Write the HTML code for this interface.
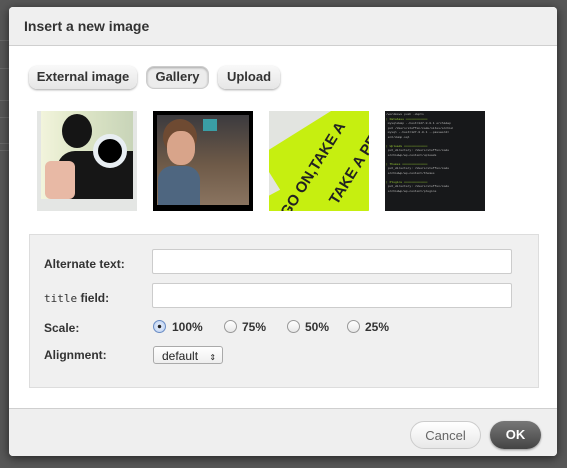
<!DOCTYPE html>
<html><head><style>
*{box-sizing:border-box;margin:0;padding:0}
body{width:567px;height:468px;background:#575757;font-family:"Liberation Sans",sans-serif;position:relative;overflow:hidden}
.bgl{position:absolute;left:0;width:9px;height:1px;background:#6a6a6a}
.dlg{position:absolute;left:9px;top:7px;width:548px;height:449px;background:#fff;border-radius:4px;overflow:hidden;box-shadow:0 2px 10px rgba(0,0,0,.6)}
.hd{height:39px;background:#efefef;border-bottom:1px solid #cfcfcf;font-weight:bold;font-size:14px;color:#333;padding:11px 0 0 15px}
.tab{position:absolute;top:59px;height:23px;border-radius:8px;background:linear-gradient(#f8f8f8,#e6e6e6);box-shadow:0 1px 2px rgba(0,0,0,.35);font-weight:bold;font-size:13px;color:#333;text-align:center;line-height:22px}
.tab.on{background:#ececec;box-shadow:inset 0 1px 2px rgba(0,0,0,.3);border:1px solid #ccc;line-height:20px}
.im{position:absolute;top:104px;width:100px;height:100px;overflow:hidden}
.panel{position:absolute;left:20px;top:227px;width:510px;height:154px;background:#f0f0f0;border:1px solid #ddd}
.lb{position:absolute;left:35px;font-weight:bold;font-size:12px;color:#333}
.inp{position:absolute;left:143px;width:360px;height:25px;background:#fff;border:1px solid #ccc;border-radius:2px}
.rad{position:absolute;top:313px;width:13px;height:13px;border-radius:50%;border:1px solid #999;background:linear-gradient(#fff,#e8e8e8)}
.rt{position:absolute;top:313px;font-weight:bold;font-size:12px;color:#333}
.ft{position:absolute;left:0;top:401px;width:548px;height:48px;background:#efefef;border-top:1px solid #cfcfcf}
.btn{position:absolute;top:12px;height:28px;border-radius:14px;font-size:13px;text-align:center;line-height:27px}
</style></head><body>
<div class="bgl" style="top:40px"></div><div class="bgl" style="top:68px"></div><div class="bgl" style="top:100px"></div><div class="bgl" style="top:117px"></div><div class="bgl" style="top:143px"></div><div class="bgl" style="top:150px"></div>
<div class="dlg">
<div class="hd">Insert a new image</div>
<div class="tab" style="left:20px;width:108px">External image</div>
<div class="tab on" style="left:137px;width:63px">Gallery</div>
<div class="tab" style="left:209px;width:62px">Upload</div>

<div class="im" style="left:28px;background:#e4e6e4">
 <div style="position:absolute;left:4px;top:0;width:92px;height:88px;background:linear-gradient(90deg,#f2f4dc,#dfe7c8 40%,#c8d4b8)"></div>
 <div style="position:absolute;left:25px;top:3px;width:30px;height:34px;border-radius:50%;background:#151515"></div>
 <div style="position:absolute;left:20px;top:40px;width:76px;height:48px;background:#161616;border-radius:18px 0 0 0"></div>
 <div style="position:absolute;left:8px;top:50px;width:30px;height:38px;background:#e8b9a5;border-radius:6px"></div>
 <div style="position:absolute;left:56px;top:23px;width:34px;height:34px;border-radius:50%;background:#000;border:5px solid #e8eef2"></div>
</div>
<div class="im" style="left:144px;background:#000">
 <div style="position:absolute;left:4px;top:4px;width:92px;height:90px;background:linear-gradient(#3b3a3e,#6e5a48 55%,#8a7460)"></div>
 <div style="position:absolute;left:50px;top:8px;width:14px;height:12px;background:#3a9ea5"></div>
 <div style="position:absolute;left:10px;top:8px;width:34px;height:36px;border-radius:50%;background:#6e4a32"></div>
 <div style="position:absolute;left:14px;top:20px;width:28px;height:34px;border-radius:45%;background:#d8a48a"></div>
 <div style="position:absolute;left:5px;top:55px;width:42px;height:39px;background:#4e6680;border-radius:14px 14px 0 0"></div>
</div>
<div class="im" style="left:260px;background:#e2e4e0">
 <div style="position:absolute;left:-10px;top:-20px;width:140px;height:50px;background:#c6ef10;transform:rotate(-32deg);transform-origin:left top;top:45px"></div>
 <div style="position:absolute;left:-10px;top:55px;width:150px;height:60px;background:#c6ef10;transform:rotate(-28deg);transform-origin:left top;top:90px"></div>
 <div style="position:absolute;left:5px;top:30px;font:bold 15px 'Liberation Sans';color:#222;transform:rotate(-58deg);white-space:nowrap;left:-10px;top:50px">GO ON,TAKE A</div>
 <div style="position:absolute;font:bold 15px 'Liberation Sans';color:#222;transform:rotate(-58deg);white-space:nowrap;left:40px;top:40px">TAKE A PEEK.</div>
</div>
<div class="im" style="left:376px;background:#17181a;font:3px 'Liberation Mono';color:#bbb;line-height:4.5px;padding:2px 1px;white-space:pre">/wordmove push -dupts
<span style="color:#9c3">| Database ════════════</span>
 mysqldump --host=127.0.0.1 orchidwp
 put /Users/steffen/code/sites/orchid
 mysql --host=127.0.0.1 --password=
 ent/dump.sql

<span style="color:#9c3">| Uploads ═════════════</span>
 put_directory: /Users/steffen/code
 orchidwp/wp-content/uploads

<span style="color:#9c3">| Themes ══════════════</span>
 put_directory: /Users/steffen/code
 orchidwp/wp-content/themes

<span style="color:#9c3">| Plugins ═════════════</span>
 put_directory: /Users/steffen/code
 orchidwp/wp-content/plugins</div>

<div class="panel"></div>
<div class="lb" style="top:250px">Alternate text:</div>
<div class="inp" style="top:242px"></div>
<div class="lb" style="top:284px"><span style="font-family:'DejaVu Sans Mono',monospace;font-weight:normal;font-size:11px">title</span> field:</div>
<div class="inp" style="top:276px"></div>
<div class="lb" style="top:314px">Scale:</div>
<div class="rad" style="left:144px;border-color:#6a8cc4;background:radial-gradient(#222 1.5px,#dfe9fa 2px,#b3cbef)"></div><div class="rt" style="left:163px">100%</div>
<div class="rad" style="left:215px"></div><div class="rt" style="left:233px">75%</div>
<div class="rad" style="left:278px"></div><div class="rt" style="left:296px">50%</div>
<div class="rad" style="left:338px"></div><div class="rt" style="left:356px">25%</div>
<div class="lb" style="top:341px">Alignment:</div>
<div style="position:absolute;left:144px;top:339px;width:70px;height:18px;border:1px solid #aaa;border-radius:3px;background:linear-gradient(#fff,#eee);font-size:12px;color:#222;padding:2px 0 0 8px">default <span style="font-size:8px;margin-left:8px">&#8661;</span></div>

<div class="ft">
 <div class="btn" style="left:401px;width:71px;background:linear-gradient(#fff,#e8e8e8);border:1px solid #ccc;color:#666">Cancel</div>
 <div class="btn" style="left:481px;width:51px;background:linear-gradient(#777,#444);color:#fff;font-weight:bold;box-shadow:0 1px 2px rgba(0,0,0,.4)">OK</div>
</div>
</div>
</body></html>
